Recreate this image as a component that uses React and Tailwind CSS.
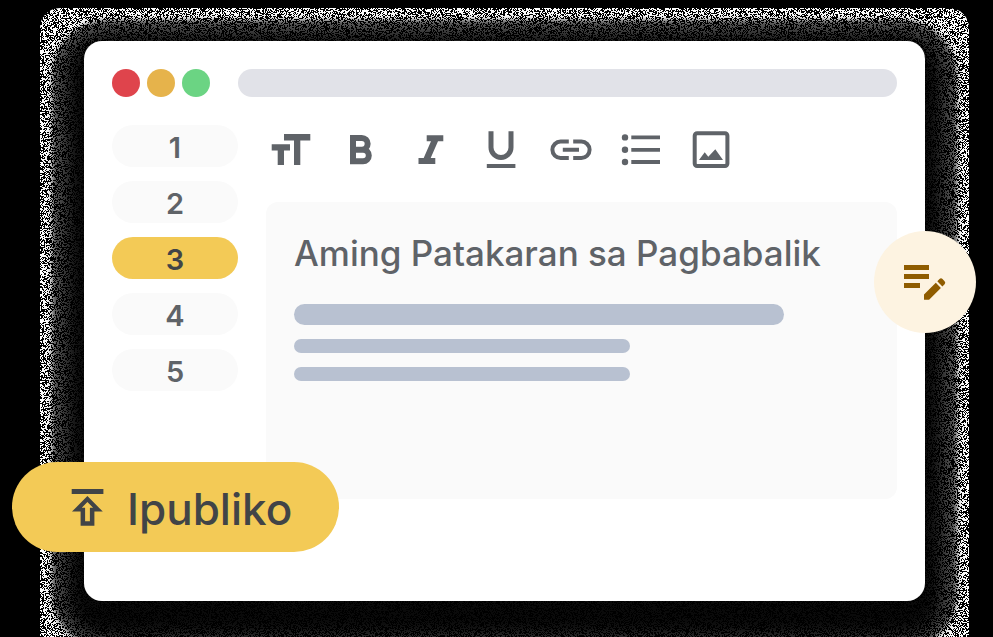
import React from "react";

const tools = [
  {
    name: "Laki ng teksto",
    art: (
      <path
        fill="currentColor"
        d="M14 5H40.3V11.5H30.3V36H24V11.5H14ZM1.7 15.3H20V21.5H14V36H7.7V21.5H1.7Z"
      />
    ),
  },
  {
    name: "Makapal",
    art: (
      <path
        fill="none"
        stroke="currentColor"
        strokeWidth="6"
        d="M13 9H21.8A5.8 5.8 0 0 1 21.8 20.7H13M13 20.7H23A5.8 5.8 0 0 1 23 32.3H13M13 6V35.3"
      />
    ),
  },
  {
    name: "Pahilig",
    art: (
      <path
        fill="currentColor"
        d="M16.7 6.2H33.3V12.2H28L20.7 29H25.3V35H8.5V29H13.7L21 12.2H16.7Z"
      />
    ),
  },
  {
    name: "Salungguhit",
    art: (
      <>
        <path
          fill="none"
          stroke="currentColor"
          strokeWidth="5"
          d="M11 2.3V18.5A10 10 0 0 0 31 18.5V2.3"
        />
        <path fill="currentColor" d="M6.8 35H35.4V39H6.8Z" />
      </>
    ),
  },
  {
    name: "Link",
    art: (
      <path
        fill="none"
        stroke="currentColor"
        strokeWidth="4"
        d="M18.8 12.6H10.6A8.2 8.2 0 0 0 10.6 29H18.8M23.2 12.6H31.4A8.2 8.2 0 0 1 31.4 29H23.2M12.8 20.8H29"
      />
    ),
  },
  {
    name: "Listahan",
    art: (
      <>
        <path
          stroke="currentColor"
          strokeWidth="3.8"
          d="M11.3 8.4H40M11.3 20.8H40M11.3 33H40"
        />
        <g fill="currentColor">
          <circle cx="5" cy="8.4" r="3.2" />
          <circle cx="5" cy="20.8" r="3.2" />
          <circle cx="5" cy="33" r="3.2" />
        </g>
      </>
    ),
  },
  {
    name: "Larawan",
    art: (
      <>
        <rect
          x="4.7"
          y="4.3"
          width="32.7"
          height="32.7"
          rx="2.4"
          fill="none"
          stroke="currentColor"
          strokeWidth="4"
        />
        <path fill="currentColor" d="M9 31L14.7 23.3L18.3 27.8L25.3 20.3L33 31Z" />
      </>
    ),
  },
];

const pages = [1, 2, 3, 4, 5];

function GrainyHalo() {
  return (
    <div
      aria-hidden="true"
      className="absolute -left-11 -right-11 -top-[33px] -bottom-16 overflow-hidden rounded-[20px]"
    >
      <svg className="h-full w-full">
        <filter
          id="grain"
          x="0"
          y="0"
          width="100%"
          height="100%"
          colorInterpolationFilters="sRGB"
        >
          <feTurbulence type="fractalNoise" baseFrequency="7.37 5.71" numOctaves="2" seed="7" />
          <feColorMatrix values="1 0 0 0 0 1 0 0 0 0 1 0 0 0 0 0 0 0 0 1" />
          <feComponentTransfer>
            <feFuncR type="discrete" tableValues="0 1" />
            <feFuncG type="discrete" tableValues="0 1" />
            <feFuncB type="discrete" tableValues="0 1" />
          </feComponentTransfer>
        </filter>
        <rect width="100%" height="100%" filter="url(#grain)" />
      </svg>
      <div className="absolute inset-x-3 top-3 bottom-4 rounded-[56px] bg-black/60 blur-[2px]" />
      <div className="absolute inset-x-6 top-6 bottom-6 rounded-[40px] bg-black/90 blur-[10px]" />
    </div>
  );
}

export default function App() {
  return (
    <main className="min-h-screen overflow-hidden bg-black pt-[41px] pr-[68px] pb-9 pl-[84px] font-['Inter',sans-serif] text-[#5f6368]">
      <div className="relative">
        <GrainyHalo />

        <section className="relative rounded-[18px] bg-white px-7 pt-7 pb-[102px]">
          <header className="flex items-center">
            <div className="flex w-[126px] shrink-0 gap-[7px]">
              <span className="size-7 rounded-full bg-[#df444c]" />
              <span className="size-7 rounded-full bg-[#e6b34b]" />
              <span className="size-7 rounded-full bg-[#6bd483]" />
            </div>
            <div className="h-7 flex-1 rounded-full bg-[#e1e2e8]" />
          </header>

          <div className="mt-7 flex gap-7">
            <nav aria-label="Mga pahina" className="flex w-[126px] shrink-0 flex-col gap-[14px]">
              {pages.map((n) => (
                <button
                  key={n}
                  type="button"
                  className={
                    n === 3
                      ? "h-[42px] rounded-full bg-[#f3ca56] pt-[2px] text-[29px] leading-none font-semibold text-[#414447]"
                      : "h-[42px] rounded-full bg-[#fafafa] pt-[2px] text-[29px] leading-none font-semibold"
                  }
                >
                  {n}
                </button>
              ))}
            </nav>

            <div className="min-w-0 flex-1">
              <div role="toolbar" aria-label="Pag-format" className="flex gap-7 px-1 pt-1">
                {tools.map((tool) => (
                  <button key={tool.name} type="button" aria-label={tool.name} className="size-[42px]">
                    <svg viewBox="0 0 42 42" className="size-full">
                      {tool.art}
                    </svg>
                  </button>
                ))}
              </div>

              <article className="mt-[31px] h-[297px] rounded-xl bg-[#fafafa] p-7">
                <h1 className="text-[35px] leading-[46px] font-medium whitespace-nowrap">
                  Aming Patakaran sa Pagbabalik
                </h1>
                <div className="mt-7 flex flex-col gap-[14px]">
                  <div className="h-[21px] w-[490px] rounded-full bg-[#b8c1d1]" />
                  <div className="h-[14px] w-[336px] rounded-full bg-[#b8c1d1]" />
                  <div className="h-[14px] w-[336px] rounded-full bg-[#b8c1d1]" />
                </div>
              </article>
            </div>
          </div>
        </section>

        <button
          type="button"
          aria-label="I-edit"
          className="absolute top-[190px] -right-[51px] flex size-[102px] items-center justify-center rounded-full bg-[#fdf3e1]"
        >
          <svg viewBox="0 0 42 42" className="size-[42px] text-[#8f5c00]">
            <path
              fill="currentColor"
              d="M0 4H25V9H0ZM0 13H25V18H0ZM0 22H16V27H0ZM20 38.7V33.6L31.8 21.8L36.9 26.9L25.1 38.7ZM33.3 20.3L35.5 18.1Q37 16.6 38.5 18.1L40.6 20.2Q42 21.7 40.6 23.2L38.4 25.4Z"
            />
          </svg>
        </button>

        <button
          type="button"
          className="absolute top-[421px] -left-[72px] flex h-[90px] w-[327px] items-center gap-[21px] rounded-full bg-[#f3ca56] pl-[58px] text-[44px] leading-none font-medium text-[#414447]"
        >
          <svg viewBox="0 0 36 42" className="h-[42px] w-9 shrink-0">
            <path
              fill="currentColor"
              fillRule="evenodd"
              d="M1.7 3H33.4V8H1.7ZM17.4 10L32.8 25.6H24.4V39.7H10.6V25.6H2ZM17.4 16L11.8 21.7H15.1V35.2H19.9V21.7H23.1Z"
            />
          </svg>
          <span className="pt-1">Ipubliko</span>
        </button>
      </div>
    </main>
  );
}
